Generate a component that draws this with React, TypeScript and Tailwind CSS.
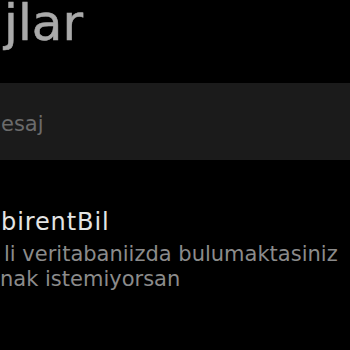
const App = () => {
  return (
    <div
      className="w-[350px] h-[350px] overflow-hidden bg-black whitespace-nowrap"
      style={{ fontFamily: "'DejaVu Sans', Verdana, sans-serif" }}
    >
      {/* Header */}
      <div className="h-[83px] pl-[4px]">
        <h1 className="text-[50px] leading-[46px] text-[#aaaaaa] [-webkit-text-stroke:0.6px_#aaaaaa]">
          jlar
        </h1>
      </div>

      {/* Search */}
      <div className="h-[77px] bg-[#1b1b1b] pt-[31px] pl-[1px]">
        <span className="block text-[21px] leading-[21px] text-[#6b6b6b]">
          esaj
        </span>
      </div>

      {/* Conversation row */}
      <div className="pt-[50px] flex flex-col">
        <span className="pl-[1px] text-[24px] leading-[24px] tracking-[0.9px] text-[#e4e4e4]">
          birentBil
        </span>
        <span className="mt-[8px] pl-[4px] text-[21px] leading-[25px] text-[#8b8b8b]">
          li veritabaniizda bulumaktasiniz
        </span>
        <span className="text-[21px] leading-[25px] text-[#8b8b8b]">
          nak istemiyorsan
        </span>
      </div>
    </div>
  );
};

export default App;
